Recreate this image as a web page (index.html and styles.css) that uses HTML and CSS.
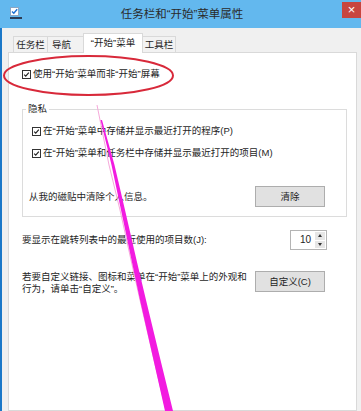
FILE: index.html
```html
<!DOCTYPE html>
<html>
<head>
  <meta charset="UTF-8" />
  <title>任务栏和“开始”菜单属性</title>
  <link rel="stylesheet" href="styles.css">
</head>
<body>
  <div class="window">
    <div class="titlebar">
      <svg class="title-icon" width="12" height="12" viewBox="0 0 12 12">
        <rect x="0.5" y="0.5" width="8" height="8" fill="#fff" stroke="#8aa6c4" />
        <path d="M2 4.5l1.8 1.8 3.4-4" stroke="#1c6fd2" stroke-width="1.4" fill="none" />
        <rect x="0" y="10" width="12" height="2" fill="#2d3d55" />
      </svg>
      <div class="title">任务栏和“开始”菜单属性</div>
      <div class="close">&times;</div>
    </div>

    <div class="frame">
      <div class="tabs">
        <div class="tab tab-taskbar">任务栏</div>
        <div class="tab tab-nav">导航</div>
        <div class="tab active">“开始”菜单</div>
        <div class="tab tab-tools">工具栏</div>
      </div>

      <div class="panel">
        <div class="check">
          <span class="box"><svg viewBox="0 0 9 9"><path d="M1.5 4.6l2 2 4-4.6" /></svg></span>
          <span>使用“开始”菜单而非“开始”屏幕</span>
        </div>

        <fieldset class="group">
          <legend>隐私</legend>
          <div class="check">
            <span class="box"><svg viewBox="0 0 9 9"><path d="M1.5 4.6l2 2 4-4.6" /></svg></span>
            <span>在“开始”菜单中存储并显示最近打开的程序(P)</span>
          </div>
          <div class="check second">
            <span class="box"><svg viewBox="0 0 9 9"><path d="M1.5 4.6l2 2 4-4.6" /></svg></span>
            <span>在“开始”菜单和任务栏中存储并显示最近打开的项目(M)</span>
          </div>
          <div class="clear-row">
            <span>从我的磁贴中清除个人信息。</span>
            <div class="btn">清除</div>
          </div>
        </fieldset>

        <div class="jump-row">
          <span>要显示在跳转列表中的最近使用的项目数(J):</span>
          <div class="spinner">
            <span class="spin-value">10</span>
            <span class="spin-arrows">
              <span class="arrow up"></span>
              <span class="arrow down"></span>
            </span>
          </div>
        </div>

        <div class="custom-row">
          <span class="custom-text">若要自定义链接、图标和菜单在“开始”菜单上的外观和行为，请单击“自定义”。</span>
          <div class="btn">自定义(C)</div>
        </div>
      </div>
    </div>
  </div>

  <svg class="marks" width="361" height="411" viewBox="0 0 361 411">
    <ellipse cx="88.5" cy="75.5" rx="84.5" ry="19.5" fill="none" stroke="#d8293a" stroke-width="2" />
    <path d="M97 105 L109 165 L120 210 L131 260 L140 300 L154 360 L166 411" fill="none" stroke="#f6a9da" stroke-width="1" />
    <polygon fill="#f21be0" points="100.5,120 111.5,165 121,210 131.5,260 140,300 153.5,360 165,411 173,411 160.5,360 146,300 136.5,260 125,210 114.5,165 102,120" />
  </svg>
</body>
</html>
```

FILE: styles.css
```css
body {
  margin: 0;
  position: relative;
  width: 361px;
  height: 411px;
  overflow: hidden;
  font-family: "Liberation Sans", "Noto Sans CJK SC", sans-serif;
  font-size: 9.5px;
  color: #1e1e1e;
  background-color: #f0f0f0;
}

.titlebar {
  display: flex;
  align-items: flex-start;
  height: 28px;
  background-color: #63b8ee;
}

.title-icon {
  margin: 7px 0 0 10px;
}

.title {
  flex: 1;
  text-align: center;
  font-size: 11.5px;
  line-height: 28px;
  color: #2a2a2a;
}

.close {
  width: 19px;
  height: 16px;
  margin-top: 2px;
  background-color: #c8453f;
  color: #fff;
  text-align: center;
  font-size: 13px;
  line-height: 16px;
}

.frame {
  box-sizing: border-box;
  height: 383px;
  border-left: 2px solid #1b78c8;
  padding: 5px 4px 0 6px;
}

.tabs {
  display: flex;
  align-items: flex-end;
  height: 19px;
  padding-left: 5px;
}

.tab {
  box-sizing: border-box;
  height: 16px;
  line-height: 15px;
  margin-right: -1px;
  border: 1px solid #d9d9d9;
  border-bottom: none;
  background-color: #f2f2f2;
  text-align: center;
}

.tab-taskbar {
  width: 35px;
}

.tab-nav {
  width: 37px;
  text-align: left;
  padding-left: 4px;
}

.tab-tools {
  width: 34px;
}

.tab.active {
  position: relative;
  z-index: 1;
  width: 60px;
  height: 20px;
  line-height: 18px;
  margin-bottom: -1px;
  background-color: #fff;
}

.panel {
  box-sizing: border-box;
  height: 359px;
  background-color: #fff;
  border: 1px solid #d9d9d9;
  padding: 15px 9px 0 13px;
}

.check {
  display: flex;
  align-items: center;
  line-height: 12px;
}

.box {
  box-sizing: border-box;
  width: 9px;
  height: 9px;
  margin-right: 2px;
  border: 1px solid #333;
  background-color: #fff;
  display: flex;
}

.box svg {
  width: 7px;
  height: 7px;
}

.box path {
  fill: none;
  stroke: #1e1e1e;
  stroke-width: 1.4;
}

.group {
  margin: 23px 0 0 0;
  min-inline-size: 0;
  border: 1px solid #dcdcdc;
  padding: 10px 21px 9px 6px;
}

.group legend {
  margin-left: -3px;
  padding: 0 2px;
  line-height: 12px;
}

.group .check {
  margin-left: 3px;
}

.group .second {
  margin-top: 10px;
}

.clear-row {
  display: flex;
  justify-content: space-between;
  align-items: center;
  margin-top: 27px;
  line-height: 12px;
}

.btn {
  box-sizing: border-box;
  width: 70px;
  height: 21px;
  border: 1px solid #adadad;
  background-color: #e1e1e1;
  display: flex;
  align-items: center;
  justify-content: center;
  color: #1e1e1e;
}

.jump-row {
  display: flex;
  justify-content: space-between;
  align-items: center;
  margin: 13px 20px 0 0;
  line-height: 12px;
}

.spinner {
  box-sizing: border-box;
  width: 37px;
  height: 20px;
  border: 1px solid #b4b4b4;
  background-color: #fff;
  display: flex;
  align-items: center;
}

.spin-value {
  flex: 1;
  text-align: right;
  padding-right: 4px;
  font-size: 10px;
}

.spin-arrows {
  display: flex;
  flex-direction: column;
  gap: 1px;
  width: 10px;
  height: 16px;
  margin-right: 1px;
}

.arrow {
  flex: 1;
  background-color: #e6e6e6;
  display: flex;
  align-items: center;
  justify-content: center;
}

.arrow::after {
  content: "";
  border-left: 2.5px solid transparent;
  border-right: 2.5px solid transparent;
}

.arrow.up::after {
  border-bottom: 3px solid #333;
}

.arrow.down::after {
  border-top: 3px solid #333;
}

.custom-row {
  display: flex;
  justify-content: space-between;
  align-items: flex-start;
  margin: 21px 22px 0 0;
  line-height: 12px;
}

.custom-text {
  width: 228px;
}

.marks {
  position: absolute;
  top: 0;
  left: 0;
  pointer-events: none;
}
```
